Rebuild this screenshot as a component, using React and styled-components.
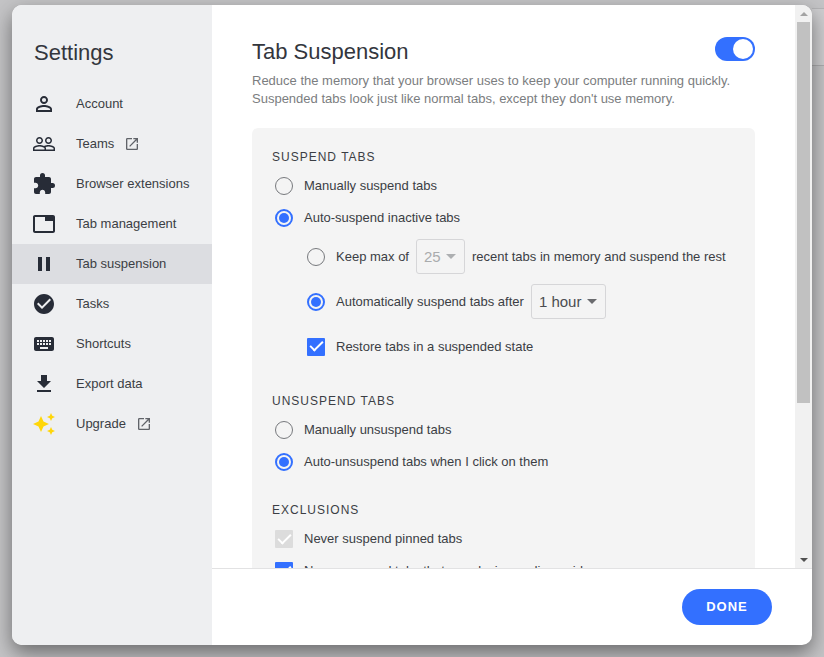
import React, { useState } from "react";
import styled, { createGlobalStyle, css } from "styled-components";
import {
  MdPersonOutline, MdPeopleOutline, MdExtension, MdTab, MdPause,
  MdCheckCircle, MdKeyboard, MdFileDownload, MdAutoAwesome, MdOpenInNew,
} from "react-icons/md";

const GlobalStyle = createGlobalStyle`
  *, *::before, *::after { box-sizing: border-box; }
  body {
    margin: 0;
    overflow: hidden;
    background: #c4c4c6;
    color: #3b3e44;
    font: 13px/18px "Liberation Sans", Arial, sans-serif;
  }
  h1, h2, h3, p, ul, fieldset { margin: 0; padding: 0; border: 0; }
  button, select, input { font: inherit; color: inherit; margin: 0; }
`;

const Backdrop = styled.div`
  height: 100vh;
  padding: 5px 12px 12px;
  background: linear-gradient(#c4c4c6 8px, #b4b4b6 8px, #b4b4b6 9px, #cdcdcf 9px, #cdcdcf 65px, #acacae 65px, #acacae 66px, #c4c4c6 66px)
    right top / 12px 100% no-repeat;
`;

const Dialog = styled.main`
  display: flex;
  height: 100%;
  overflow: hidden;
  border-radius: 10px;
  background: #fff;
  box-shadow: 0 8px 20px rgba(0, 0, 0, 0.45);
`;

const Sidebar = styled.nav`
  flex: 0 0 200px;
  background: #eeeff1;
`;

const SidebarTitle = styled.h1`
  padding: 34px 22px 18px;
  font-size: 22px;
  line-height: 27px;
  font-weight: 400;
  color: #33363d;
`;

const NavList = styled.ul`
  list-style: none;
`;

const NavLink = styled.a`
  display: flex;
  align-items: center;
  height: 40px;
  padding-left: 20px;
  color: inherit;
  text-decoration: none;
  background: ${(p) => (p.$active ? "#dcdde1" : "transparent")};

  > svg:first-child {
    width: 24px;
    height: 24px;
    margin-right: 20px;
    color: ${(p) => p.$tint || "#272c37"};
  }
`;

const ExternalIcon = styled(MdOpenInNew)`
  width: 16px;
  height: 16px;
  margin-left: 10px;
  color: #606369;
`;

const Main = styled.div`
  flex: 1;
  min-width: 0;
  display: flex;
  flex-direction: column;
`;

const Viewport = styled.div`
  flex: 1;
  min-height: 0;
  display: flex;
`;

const Content = styled.section`
  flex: 1;
  min-width: 0;
  overflow-y: auto;
  scrollbar-width: none;
  padding: 32px 40px 40px;
`;

const TitleRow = styled.header`
  display: flex;
  justify-content: space-between;
  align-items: flex-start;
`;

const Title = styled.h2`
  font-size: 22px;
  line-height: 30px;
  font-weight: 400;
  color: #33363d;
`;

const Switch = styled.input`
  appearance: none;
  display: flex;
  width: 40px;
  height: 24px;
  padding: 2px;
  border-radius: 12px;
  background: #b5b7bb;

  &::before {
    content: "";
    width: 20px;
    height: 20px;
    border-radius: 50%;
    background: #fff;
  }
  &:checked { justify-content: flex-end; background: #3370ff; }
`;

const Description = styled.p`
  margin: 5px 0 20px;
  color: #7b7d80;
`;

const Panel = styled.div`
  padding: 20px;
  border-radius: 6px;
  background: #f4f4f4;
`;

const Group = styled.fieldset`
  min-width: 0;
  & + & { margin-top: 23px; }
`;

const GroupTitle = styled.legend`
  padding: 0;
  margin-bottom: 4px;
  font-size: 12px;
  letter-spacing: 1px;
`;

const Option = styled.div`
  display: flex;
  align-items: center;
  height: ${(p) => (p.$nested ? 45 : 32)}px;
  padding-left: ${(p) => (p.$nested ? 35 : 3)}px;
  white-space: nowrap;
`;

const controlBase = css`
  appearance: none;
  flex: none;
  display: grid;
  place-items: center;
  width: 18px;
  height: 18px;
  margin-right: 11px;
`;

const Radio = styled.input`
  ${controlBase}
  border: 1px solid #77797d;
  border-radius: 50%;

  &:checked { border: 2px solid #3370ff; }
  &:checked::before {
    content: "";
    width: 10px;
    height: 10px;
    border-radius: 50%;
    background: #3370ff;
  }
`;

const TickBox = styled.input`
  ${controlBase}
  border: 1px solid #77797d;
  border-radius: 1px;

  &:checked { border: 0; background: #3370ff; }
  &:checked::before {
    content: "";
    width: 13px;
    height: 7px;
    margin-bottom: 4px;
    border: solid #fff;
    border-width: 0 0 2px 2px;
    transform: rotate(-45deg);
  }
  &:disabled { background: #dcdcdc; }
`;

const SelectBox = styled.span`
  display: inline-grid;
  align-items: center;
  width: ${(p) => (p.$wide ? 75 : 49)}px;
  height: 35px;
  margin: 0 7px;
  color: ${(p) => (p.$muted ? "#a9abad" : "#4a4c50")};

  > * { grid-area: 1 / 1; }
  > svg { justify-self: end; margin-right: 9px; pointer-events: none; }
`;

const Select = styled.select`
  appearance: none;
  width: 100%;
  height: 100%;
  padding: 0 7px;
  border: 1px solid #d6d6d8;
  border-radius: 3px;
  background: transparent;
  font-size: 15px;
  &:disabled { opacity: 1; color: inherit; }
`;

const ScrollTrack = styled.div`
  flex: 0 0 17px;
  display: flex;
  flex-direction: column;
  background: #f1f1f1;
`;

const ScrollArrow = styled.button`
  display: grid;
  place-items: center;
  height: 17px;
  padding: 0;
  border: 0;
  background: none;
`;

const ScrollRail = styled.div`
  flex: 1;
  padding: 0 2px;
`;

const ScrollThumb = styled.div`
  height: 72%;
  background: #c1c1c1;
`;

const Footer = styled.footer`
  display: flex;
  justify-content: flex-end;
  align-items: center;
  height: 77px;
  padding: 0 40px;
  border-top: 1px solid #e2e2e3;
`;

const DoneButton = styled.button`
  width: 90px;
  height: 36px;
  border: 0;
  border-radius: 18px;
  background: #3370ff;
  color: #fff;
  font-size: 13px;
  font-weight: 700;
  letter-spacing: 1px;
`;

const NAV = [
  { label: "Account", icon: MdPersonOutline },
  { label: "Teams", icon: MdPeopleOutline, external: true },
  { label: "Browser extensions", icon: MdExtension },
  { label: "Tab management", icon: MdTab },
  { label: "Tab suspension", icon: MdPause, active: true },
  { label: "Tasks", icon: MdCheckCircle },
  { label: "Shortcuts", icon: MdKeyboard },
  { label: "Export data", icon: MdFileDownload },
  { label: "Upgrade", icon: MdAutoAwesome, external: true, tint: "#ffd60a" },
];

function Dropdown({ label, value, muted, wide }) {
  return (
    <SelectBox $muted={muted} $wide={wide}>
      <Select aria-label={label} disabled={muted} defaultValue={value}>
        <option>{value}</option>
      </Select>
      <svg width="10" height="5" viewBox="0 0 10 5" aria-hidden="true">
        <path d="M0 0h10L5 5z" fill={muted ? "#adafb1" : "#6a6b6e"} />
      </svg>
    </SelectBox>
  );
}

export default function App() {
  const [suspend, setSuspend] = useState("auto");
  const [mode, setMode] = useState("time");
  const [unsuspend, setUnsuspend] = useState("auto");

  return (
    <>
      <GlobalStyle />
      <Backdrop>
        <Dialog>
          <Sidebar aria-label="Settings">
            <SidebarTitle>Settings</SidebarTitle>
            <NavList>
              {NAV.map(({ label, icon: Icon, active, external, tint }) => (
                <li key={label}>
                  <NavLink href="#" $active={active} $tint={tint} aria-current={active ? "page" : undefined}>
                    <Icon aria-hidden="true" />
                    {label}
                    {external && <ExternalIcon aria-hidden="true" />}
                  </NavLink>
                </li>
              ))}
            </NavList>
          </Sidebar>
          <Main>
            <Viewport>
              <Content>
                <TitleRow>
                  <Title id="page-title">Tab Suspension</Title>
                  <Switch type="checkbox" role="switch" aria-labelledby="page-title" defaultChecked />
                </TitleRow>
                <Description>
                  Reduce the memory that your browser uses to keep your computer running quickly.
                  <br />
                  Suspended tabs look just like normal tabs, except they don't use memory.
                </Description>
                <Panel>
                  <Group>
                    <GroupTitle>SUSPEND TABS</GroupTitle>
                    <Option>
                      <Radio type="radio" id="s-manual" name="suspend" checked={suspend === "manual"} onChange={() => setSuspend("manual")} />
                      <label htmlFor="s-manual">Manually suspend tabs</label>
                    </Option>
                    <Option>
                      <Radio type="radio" id="s-auto" name="suspend" checked={suspend === "auto"} onChange={() => setSuspend("auto")} />
                      <label htmlFor="s-auto">Auto-suspend inactive tabs</label>
                    </Option>
                    <Option $nested>
                      <Radio type="radio" id="m-count" name="mode" checked={mode === "count"} onChange={() => setMode("count")} />
                      <label htmlFor="m-count">Keep max of</label>
                      <Dropdown label="Recent tabs kept" value="25" muted />
                      <span>recent tabs in memory and suspend the rest</span>
                    </Option>
                    <Option $nested>
                      <Radio type="radio" id="m-time" name="mode" checked={mode === "time"} onChange={() => setMode("time")} />
                      <label htmlFor="m-time">Automatically suspend tabs after</label>
                      <Dropdown label="Time until suspended" value="1 hour" wide />
                    </Option>
                    <Option $nested>
                      <TickBox type="checkbox" id="restore" defaultChecked />
                      <label htmlFor="restore">Restore tabs in a suspended state</label>
                    </Option>
                  </Group>
                  <Group>
                    <GroupTitle>UNSUSPEND TABS</GroupTitle>
                    <Option>
                      <Radio type="radio" id="u-manual" name="unsuspend" checked={unsuspend === "manual"} onChange={() => setUnsuspend("manual")} />
                      <label htmlFor="u-manual">Manually unsuspend tabs</label>
                    </Option>
                    <Option>
                      <Radio type="radio" id="u-auto" name="unsuspend" checked={unsuspend === "auto"} onChange={() => setUnsuspend("auto")} />
                      <label htmlFor="u-auto">Auto-unsuspend tabs when I click on them</label>
                    </Option>
                  </Group>
                  <Group>
                    <GroupTitle>EXCLUSIONS</GroupTitle>
                    <Option>
                      <TickBox type="checkbox" id="x-pinned" defaultChecked disabled />
                      <label htmlFor="x-pinned">Never suspend pinned tabs</label>
                    </Option>
                    <Option>
                      <TickBox type="checkbox" id="x-media" defaultChecked />
                      <label htmlFor="x-media">Never suspend tabs that are playing audio or video</label>
                    </Option>
                  </Group>
                </Panel>
              </Content>
              <ScrollTrack>
                <ScrollArrow type="button" aria-label="Scroll up">
                  <svg width="8" height="4" viewBox="0 0 8 4"><path d="M0 4h8L4 0z" fill="#a3a3a3" /></svg>
                </ScrollArrow>
                <ScrollRail><ScrollThumb /></ScrollRail>
                <ScrollArrow type="button" aria-label="Scroll down">
                  <svg width="8" height="4" viewBox="0 0 8 4"><path d="M0 0h8L4 4z" fill="#505050" /></svg>
                </ScrollArrow>
              </ScrollTrack>
            </Viewport>
            <Footer>
              <DoneButton type="button">DONE</DoneButton>
            </Footer>
          </Main>
        </Dialog>
      </Backdrop>
    </>
  );
}
